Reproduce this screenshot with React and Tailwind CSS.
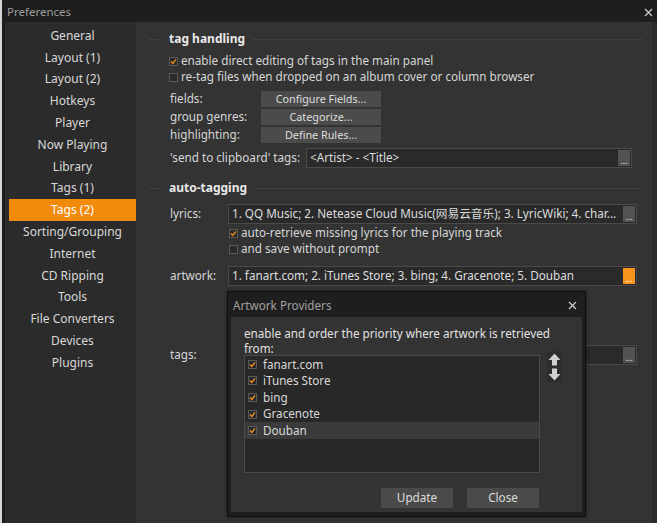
import React from "react";

function Check({ checked }) {
  return (
    <span className="w-[9px] h-[9px] border border-[#5a5a5a] bg-[#2a2a2a] flex items-center justify-center shrink-0">
      {checked && (
        <svg width="7" height="7" viewBox="0 0 7 7">
          <path d="M1 3.6 L2.8 5.4 L6 1.4" stroke="#f0901a" strokeWidth="1.4" fill="none" />
        </svg>
      )}
    </span>
  );
}

function Dots({ orange }) {
  return (
    <span
      className={`w-[12px] h-[16px] flex items-end justify-center text-[9px] leading-[11px] shrink-0 ${
        orange ? "bg-[#f7931e] text-white" : "bg-[#535353] text-[#e0e0e0]"
      }`}
    >
      ...
    </span>
  );
}

function Field({ text, orange, className = "" }) {
  return (
    <div className={`h-[20px] border border-[#4a4a4a] bg-[#2a2a2a] flex items-center pl-[3px] pr-[1px] ${className}`}>
      <span className="flex-1 whitespace-nowrap overflow-hidden text-[#dcdcdc]">{text}</span>
      <Dots orange={orange} />
    </div>
  );
}

function Header({ children, className = "" }) {
  return (
    <div className={`flex items-center h-[18px] ${className}`}>
      <div className="w-[14px] h-px bg-[#3f3f3f]" />
      <span className="px-[7px] font-bold text-[#e8e8e8] text-[12px]">{children}</span>
      <div className="flex-1 h-px bg-[#3f3f3f]" />
    </div>
  );
}

function CheckRow({ checked, children, className = "" }) {
  return (
    <div className={`flex items-center gap-[3px] h-[16px] ${className}`}>
      <Check checked={checked} />
      <span className="whitespace-nowrap">{children}</span>
    </div>
  );
}

function Btn({ children }) {
  return (
    <div className="w-[120px] h-[16px] bg-[#4b4b4b] flex items-center justify-center text-[#dedede] text-[10.8px]">
      {children}
    </div>
  );
}

const nav = [
  "General",
  "Layout (1)",
  "Layout (2)",
  "Hotkeys",
  "Player",
  "Now Playing",
  "Library",
  "Tags (1)",
  "Tags (2)",
  "Sorting/Grouping",
  "Internet",
  "CD Ripping",
  "Tools",
  "File Converters",
  "Devices",
  "Plugins",
];

function Arrow({ down }) {
  return (
    <svg width="13" height="13" viewBox="0 0 13 13" className={down ? "rotate-180" : ""}>
      <path d="M6.5 0.5 L12.5 7 L9 7 L9 12.5 L4 12.5 L4 7 L0.5 7 Z" fill="#d0d0d0" />
    </svg>
  );
}

export default function App() {
  const providers = ["fanart.com", "iTunes Store", "bing", "Gracenote", "Douban"];
  return (
    <div className="w-[657px] h-[523px] overflow-hidden relative bg-[#1e1e1e] flex flex-col border-l-2 border-[#d6d6d6] font-['Noto_Sans',sans-serif] text-[11.7px] text-[#d6d6d6]">
      {/* title bar */}
      <div className="h-[22px] flex items-center justify-between pl-[5px] pr-[4px] shrink-0">
        <span className="text-[#9c9c9c] text-[11.5px] mt-[1px]">Preferences</span>
        <svg width="9" height="9" viewBox="0 0 9 9" className="mt-[2px]">
          <path d="M1 1 L8 8 M8 1 L1 8" stroke="#cfcfcf" strokeWidth="1.2" />
        </svg>
      </div>
      <div className="flex flex-1 min-h-0">
        <div className="w-[3px] bg-[#1c1c1c]" />
        {/* sidebar */}
        <div className="w-[131px] bg-[#2b2b2b] pl-[4px] pt-[3px] flex flex-col">
          {nav.map((n) => (
            <div
              key={n}
              className={`h-[21.8px] flex items-center justify-center text-[12px] ${
                n === "Tags (2)" ? "bg-[#f28a0c] text-white" : "text-[#d8d8d8]"
              }`}
            >
              {n}
            </div>
          ))}
        </div>
        {/* content */}
        <div className="w-[516px] bg-[#333333] pl-[12px] pr-[9px] pt-[8px] flex flex-col">
          <Header>tag handling</Header>
          <div className="ml-[21px] mt-[5px] flex flex-col">
            <CheckRow checked>enable direct editing of tags in the main panel</CheckRow>
            <CheckRow>re-tag files when dropped on an album cover or column browser</CheckRow>
            <div className="mt-[6px] flex flex-col gap-[2px] ml-[1px]">
              {[
                ["fields:", "Configure Fields..."],
                ["group genres:", "Categorize..."],
                ["highlighting:", "Define Rules..."],
              ].map(([l, b]) => (
                <div key={l} className="flex items-center h-[16px]">
                  <span className="w-[91px]">{l}</span>
                  <Btn>{b}</Btn>
                </div>
              ))}
            </div>
            <div className="mt-[5px] flex items-center ml-[1px]">
              <span className="w-[136px] whitespace-nowrap">'send to clipboard' tags:</span>
              <Field text="<Artist> - <Title>" className="w-[326px]" />
            </div>
          </div>
          <Header className="mt-[11px]">auto-tagging</Header>
          <div className="ml-[22px] mt-[7px] flex flex-col">
            <div className="flex items-center">
              <span className="w-[58px]">lyrics:</span>
              <Field
                text="1. QQ Music; 2. Netease Cloud Music(网易云音乐); 3. LyricWiki; 4. char..."
                className="w-[409px] font-['Noto_Sans','Noto_Sans_CJK_SC',sans-serif]"
              />
            </div>
            <div className="ml-[59px] mt-[1px] flex flex-col">
              <CheckRow checked className="h-[15px]">auto-retrieve missing lyrics for the playing track</CheckRow>
              <CheckRow className="h-[15px]">and save without prompt</CheckRow>
            </div>
            <div className="flex items-center mt-[9px]">
              <span className="w-[58px]">artwork:</span>
              <Field
                text="1. fanart.com; 2. iTunes Store; 3. bing; 4. Gracenote; 5. Douban"
                orange
                className="w-[409px]"
              />
            </div>
            <div className="ml-[59px] mt-[4px]">
              <CheckRow>auto-retrieve missing artwork for the playing track</CheckRow>
            </div>
            <div className="flex items-center mt-[39px]">
              <span className="w-[58px]">tags:</span>
              <Field text="" className="w-[409px]" />
            </div>
          </div>
        </div>
        <div className="flex-1 bg-[#2b2b2b]" />
      </div>

      {/* Artwork Providers dialog */}
      <div className="absolute left-[225px] top-[291px] w-[359px] h-[226px] bg-[#1e1e1e] border border-[#0e0e0e] flex flex-col shadow-[0_0_3px_rgba(0,0,0,0.6)]">
        <div className="h-[25px] shrink-0 flex items-center justify-between pl-[5px] pr-[8px] pt-[2px]">
          <span className="text-[#a0a0a0] text-[11.7px]">Artwork Providers</span>
          <svg width="9" height="9" viewBox="0 0 9 9">
            <path d="M1 1 L8 8 M8 1 L1 8" stroke="#d0d0d0" strokeWidth="1.2" />
          </svg>
        </div>
        <div className="flex-1 mx-[3px] mb-[4px] bg-[#333333] pl-[13px] pt-[9px] flex flex-col">
          <div className="leading-[14.5px] text-[#e2e2e2]">
            enable and order the priority where artwork is retrieved
            <br />
            from:
          </div>
          <div className="flex items-start">
            <div className="w-[296px] h-[118px] bg-[#282828] border border-[#4a4a4a] flex flex-col">
              {providers.map((p) => (
                <div
                  key={p}
                  className={`h-[16.6px] flex items-center gap-[6px] pl-[3px] ${
                    p === "Douban" ? "bg-[#3b3b3b]" : ""
                  }`}
                >
                  <Check checked />
                  <span className="text-[#d8d8d8]">{p}</span>
                </div>
              ))}
            </div>
            <div className="ml-[7px] -mt-[4px] w-[15px] h-[31px] bg-[#2d2d2d] flex flex-col items-center justify-center gap-[2px]">
              <Arrow />
              <Arrow down />
            </div>
          </div>
          <div className="flex justify-end gap-[14px] mt-[15px] pr-[43px]">
            <div className="w-[72px] h-[20px] bg-[#4a4a4a] flex items-center justify-center text-[#dcdcdc]">
              Update
            </div>
            <div className="w-[72px] h-[20px] bg-[#4a4a4a] flex items-center justify-center text-[#dcdcdc]">
              Close
            </div>
          </div>
        </div>
      </div>
    </div>
  );
}
